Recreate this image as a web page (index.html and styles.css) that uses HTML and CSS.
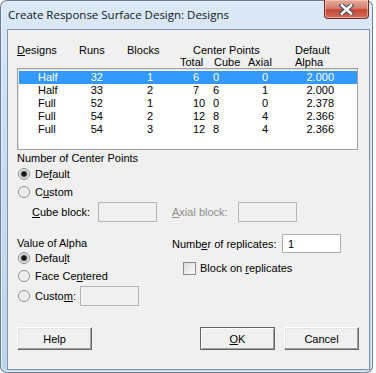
FILE: index.html
```html
<!DOCTYPE html>
<html lang="en">
<head>
    <meta charset="UTF-8">
    <title>Create Response Surface Design: Designs</title>
    <link rel="stylesheet" href="styles.css">
</head>
<body>
    <div class="window">
        <div class="titlebar">
            <div class="title">Create Response Surface Design: Designs</div>
            <div class="close">
                <svg width="17" height="11" viewBox="0 0 17 11">
                    <path d="M4 1.5 L13 9.5 M13 1.5 L4 9.5" stroke="#3c4a5c" stroke-width="4.6" stroke-linecap="square"/>
                    <path d="M4 1.5 L13 9.5 M13 1.5 L4 9.5" stroke="#ffffff" stroke-width="2.6" stroke-linecap="square"/>
                </svg>
            </div>
        </div>
        <div class="client">
            <div class="head">
                <span class="h-designs"><u>D</u>esigns</span>
                <span class="h-runs">Runs</span>
                <span class="h-blocks">Blocks</span>
                <span class="h-center">Center Points</span>
                <span class="h-default">Default</span>
                <span class="h-total">Total</span>
                <span class="h-cube">Cube</span>
                <span class="h-axial">Axial</span>
                <span class="h-alpha">Alpha</span>
            </div>
            <div class="listbox">
                <div class="row selected">
                    <span class="c-design">Half</span><span class="c-runs">32</span><span class="c-blocks">1</span><span class="c-total">6</span><span class="c-cube">0</span><span class="c-axial">0</span><span class="c-alpha">2.000</span>
                </div>
                <div class="row">
                    <span class="c-design">Half</span><span class="c-runs">33</span><span class="c-blocks">2</span><span class="c-total">7</span><span class="c-cube">6</span><span class="c-axial">1</span><span class="c-alpha">2.000</span>
                </div>
                <div class="row">
                    <span class="c-design">Full</span><span class="c-runs">52</span><span class="c-blocks">1</span><span class="c-total">10</span><span class="c-cube">0</span><span class="c-axial">0</span><span class="c-alpha">2.378</span>
                </div>
                <div class="row">
                    <span class="c-design">Full</span><span class="c-runs">54</span><span class="c-blocks">2</span><span class="c-total">12</span><span class="c-cube">8</span><span class="c-axial">4</span><span class="c-alpha">2.366</span>
                </div>
                <div class="row">
                    <span class="c-design">Full</span><span class="c-runs">54</span><span class="c-blocks">3</span><span class="c-total">12</span><span class="c-cube">8</span><span class="c-axial">4</span><span class="c-alpha">2.366</span>
                </div>
            </div>

            <div class="group-label center-label">Number of Center Points</div>
            <div class="option"><span class="radio checked"></span><span>De<u>f</u>ault</span></div>
            <div class="option"><span class="radio"></span><span>C<u>u</u>stom</span></div>
            <div class="split blocks-row">
                <div class="field cube-field">
                    <span class="field-label"><u>C</u>ube block:</span>
                    <span class="edit disabled"></span>
                </div>
                <div class="field">
                    <span class="field-label grey"><u>A</u>xial block:</span>
                    <span class="edit disabled"></span>
                </div>
            </div>

            <div class="split lower">
                <div>
                    <div class="group-label alpha-label">Value of Alpha</div>
                    <div class="option"><span class="radio checked"></span><span>Defau<u>l</u>t</span></div>
                    <div class="option"><span class="radio"></span><span>Face Ce<u>n</u>tered</span></div>
                    <div class="option custom-alpha">
                        <span class="radio"></span><span class="custom-text">Custo<u>m</u>:</span>
                        <span class="edit disabled"></span>
                    </div>
                </div>
                <div>
                    <div class="field replicates">
                        <span class="rep-label">Numb<u>e</u>r of replicates:</span>
                        <span class="edit">1</span>
                    </div>
                    <div class="check-row"><span class="checkbox"></span><span>Block on <u>r</u>eplicates</span></div>
                </div>
            </div>

            <div class="buttons">
                <button class="btn">Help</button>
                <div class="btn-group">
                    <button class="btn default"><u>O</u>K</button>
                    <button class="btn">Cancel</button>
                </div>
            </div>
        </div>
    </div>
</body>
</html>
```

FILE: styles.css
```css
*{
    margin: 0;
    padding: 0;
    box-sizing: border-box;
}
body{
    background-color: #ffffff;
    font-family: "Liberation Sans", Arial, sans-serif;
    font-size: 11px;
    color: #000000;
}
.window{
    width: 373px;
    height: 373px;
    border-radius: 7px;
    padding: 0 3px 3px 7px;
    background: linear-gradient(to bottom, #dce9f7 0%, #c9dcf1 40%, #bcd3ec 100%);
    box-shadow: inset 0 0 0 1px #6b7d94, inset 0 0 0 2px #e6f0fb;
    display: flex;
    flex-direction: column;
}
.titlebar{
    height: 29px;
    display: flex;
    justify-content: space-between;
    align-items: flex-start;
}
.title{
    font-family: "Open Sans", sans-serif;
    font-size: 11.5px;
    margin: 7px 0 0 1px;
    color: #101820;
}
.close{
    width: 45px;
    height: 19px;
    margin-right: 1px;
    border: 1px solid #6e2e29;
    border-top: none;
    border-radius: 0 0 4px 4px;
    background: linear-gradient(to bottom, #e8a89b 0%, #d7806f 45%, #c54632 55%, #d0705c 100%);
    box-shadow: inset 0 0 0 1px rgba(255, 220, 210, 0.5);
    display: flex;
    justify-content: center;
    align-items: center;
}
.client{
    flex: 1;
    background-color: #f0f0f0;
    border: 1px solid #8495ab;
    padding: 14px 9px 0 9px;
}
.head{
    display: grid;
    grid-template-columns: 62px 48px 53px 34px 34px 47px auto;
    grid-template-rows: 12px 12px;
    line-height: 12px;
}
.h-designs{ grid-row: 1; grid-column: 1; }
.h-runs{ grid-row: 1; grid-column: 2; }
.h-blocks{ grid-row: 1; grid-column: 3; }
.h-center{ grid-row: 1; grid-column: 4 / span 3; padding-left: 13px; }
.h-default{ grid-row: 1; grid-column: 7; }
.h-total{ grid-row: 2; grid-column: 4; }
.h-cube{ grid-row: 2; grid-column: 5; }
.h-axial{ grid-row: 2; grid-column: 6; }
.h-alpha{ grid-row: 2; grid-column: 7; }

.listbox{
    width: 341px;
    height: 82px;
    background-color: #ffffff;
    border: 1px solid #a0a0a0;
    box-shadow: inset 1px 1px 0 #e3e3e3;
    padding: 2px 0 0 1px;
}
.row{
    display: grid;
    grid-template-columns: 51px 34px 50px 59px 35px 20px 66px;
    height: 13px;
    line-height: 13px;
}
.row.selected{
    background-color: #3399ff;
    color: #ffffff;
}
.c-design{ padding-left: 19px; }
.c-runs{ text-align: right; padding-right: 1px; }
.c-blocks{ text-align: right; padding-right: 1px; }
.c-total{ padding-left: 39px; }
.c-axial{ text-align: right; }
.c-alpha{ text-align: right; }

.group-label{
    line-height: 13px;
    height: 13px;
}
.center-label{
    margin-top: 2px;
}
.option{
    height: 18px;
    display: flex;
    align-items: center;
}
.radio{
    width: 12px;
    height: 12px;
    margin: 0 5px 0 1px;
    border-radius: 50%;
    border: 1px solid #8a8a8a;
    background: radial-gradient(circle at 50% 50%, #e4e4e4 0%, #f6f6f6 70%);
}
.radio.checked{
    background: radial-gradient(circle at 50% 50%, #111111 0, #1a1a1a 2px, #8a8a8a 3px, #e8e8e8 4px, #f6f6f6 100%);
}
.split{
    display: grid;
    grid-template-columns: 155px auto;
}
.blocks-row{
    margin-top: 1px;
    height: 20px;
}
.field{
    display: flex;
    align-items: center;
}
.cube-field{
    padding-left: 15px;
}
.field-label{
    width: 66px;
}
.grey{
    color: #8d8d8d;
}
.edit{
    width: 59px;
    height: 20px;
    border: 1px solid #abadb3;
    background-color: #ffffff;
    padding: 3px 0 0 5px;
    line-height: 12px;
}
.edit.disabled{
    background-color: #f0f0f0;
    border-color: #b5b5b5;
}
.lower{
    margin-top: 12px;
}
.alpha-label{
    padding-top: 3px;
    height: 15px;
    line-height: 12px;
}
.custom-alpha{
    margin-top: 1px;
    height: 20px;
}
.custom-text{
    width: 45px;
}
.replicates .edit{
    height: 19px;
}
.rep-label{
    width: 110px;
}
.check-row{
    margin-top: 8px;
    height: 14px;
    display: flex;
    align-items: center;
    padding-left: 11px;
}
.checkbox{
    width: 13px;
    height: 13px;
    margin-right: 4px;
    border: 1px solid #8a8a8a;
    background: linear-gradient(135deg, #dcdcdc 0%, #fbfbfb 100%);
}
.buttons{
    margin-top: 21px;
    display: flex;
    justify-content: space-between;
    width: 342px;
}
.btn-group{
    display: flex;
    gap: 9px;
}
.btn{
    width: 75px;
    height: 23px;
    font-family: "Liberation Sans", Arial, sans-serif;
    font-size: 11px;
    color: #000000;
    background-color: #f0f0f0;
    border: 1px solid;
    border-color: #ffffff #696969 #696969 #ffffff;
    box-shadow: inset -1px -1px 0 #a0a0a0, inset 1px 1px 0 #e3e3e3;
}
.btn.default{
    border: 1px solid #646464;
    box-shadow: inset 1px 1px 0 #ffffff, inset -1px -1px 0 #a0a0a0;
}
```
